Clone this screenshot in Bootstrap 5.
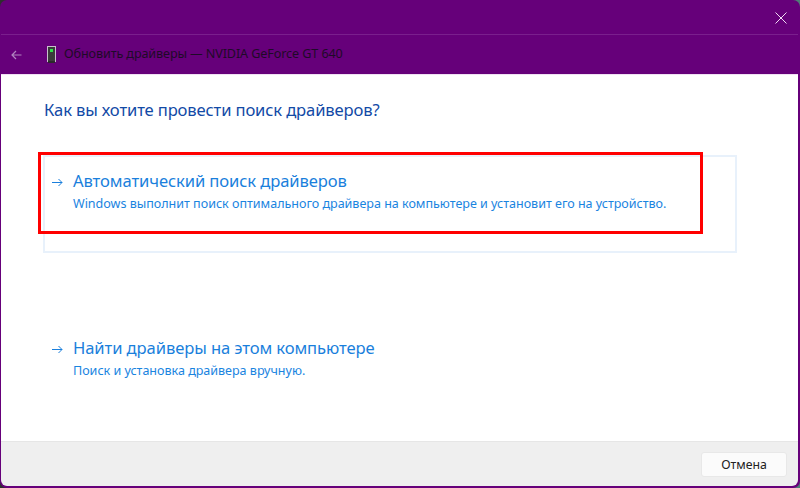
<!DOCTYPE html>
<html lang="ru">
<head>
<meta charset="utf-8">
<title>Обновить драйверы</title>
<link href="https://cdn.jsdelivr.net/npm/bootstrap@5.3.0/dist/css/bootstrap.min.css" rel="stylesheet">
<style>
html,body{height:100%;margin:0;overflow:hidden}
body{background:linear-gradient(to right,#2e2e2e 50%,#4f7d76 50%);font-family:"Noto Sans","Open Sans",sans-serif;}
.win{height:488px;padding:0 2px 2px 1px;position:relative;background:#66007a;border-radius:7px}
.cap-top{height:35px;border-bottom:1px solid #7a1f8d}
.close-ic{width:12px;height:12px;margin:12px 11px 0 0;display:block}
.cap-bar{height:39px;padding-left:10px}
.back-ic{width:11px;height:10px;margin-right:25px}
.dev-ic{width:9px;height:17px;margin-right:8px}
.cap-title{font-size:12.6px;color:#1e0a28;letter-spacing:-.1px;line-height:1}
.main-area{height:367px;background:#fff;padding:24px 62px 0 42px;border-top:1px solid #f0e0f4}
.ask{font-size:16.6px;line-height:22px;color:#124aa6;margin:0 0 34px 1px;letter-spacing:-.14px}
.opt{padding:13px 0 0 7px}
.opt-box{height:98px;border:2px solid #e8f1fb;width:694px;margin-bottom:73px}
.opt-plain{padding:11px 0 0 9px}
.arrow-ic{width:11px;height:9px;margin-right:10px;margin-top:8px;flex:none}
.opt-h{font-size:16.6px;line-height:22px;color:#1a7fdc;letter-spacing:-.1px}
.opt-s{font-size:12.55px;line-height:17px;color:#1a84df;margin-top:3px;letter-spacing:-.02px}
.foot{height:45px;background:#efefef;border-top:1px solid #e6e6e6;padding-right:11px;border-bottom-left-radius:6px;border-bottom-right-radius:6px}
.cancel{width:86px;height:25px;padding:0;font-size:12.3px;line-height:23px;background:#fbfbfb;border:1px solid #e8e8e8;border-radius:3px;color:#222}
.red-frame{position:absolute;left:38px;top:152px;width:665px;height:82px;border:3px solid #f00;pointer-events:none}
</style>
</head>
<body>
<div class="win">
  <div class="cap-top d-flex justify-content-end">
    <svg class="close-ic" viewBox="0 0 12 12"><path d="M.5.5l11 11M11.500.5l-11 11" stroke="#f0dcf4" stroke-width="1" fill="none"/></svg>
  </div>
  <div class="cap-bar d-flex align-items-center">
    <svg class="back-ic" viewBox="0 0 11 10"><path d="M10.500 5H1M5 1L1 5l4 4" stroke="#b184c0" stroke-width="1.200" fill="none"/></svg>
    <svg class="dev-ic" viewBox="0 0 9 17"><rect x=".5" y=".5" width="8" height="15" fill="#3b3b3b" stroke="#c9c0cc"/><rect x="1" y="15" width="7" height="2" fill="#2a2a2a"/><rect x="3" y="3" width="3" height="3" fill="#2ee24a"/></svg>
    <span class="cap-title">Обновить драйверы — NVIDIA GeForce GT 640</span>
  </div>
  <div class="main-area">
    <p class="ask">Как вы хотите провести поиск драйверов?</p>
    <div class="opt-box opt d-flex">
      <svg class="arrow-ic" viewBox="0 0 11 9"><path d="M0 4.500h10M6.500 1l3.500 3.500L6.500 8" stroke="#1a7fdc" stroke-width="1" fill="none"/></svg>
      <div>
        <div class="opt-h">Автоматический поиск драйверов</div>
        <div class="opt-s">Windows выполнит поиск оптимального драйвера на компьютере и установит его на устройство.</div>
      </div>
    </div>
    <div class="opt-plain d-flex">
      <svg class="arrow-ic" viewBox="0 0 11 9"><path d="M0 4.500h10M6.500 1l3.500 3.500L6.500 8" stroke="#1a7fdc" stroke-width="1" fill="none"/></svg>
      <div>
        <div class="opt-h">Найти драйверы на этом компьютере</div>
        <div class="opt-s">Поиск и установка драйвера вручную.</div>
      </div>
    </div>
  </div>
  <div class="foot d-flex justify-content-end align-items-center">
    <button type="button" class="btn cancel">Отмена</button>
  </div>
  <div class="red-frame"></div>
</div>
</body>
</html>
